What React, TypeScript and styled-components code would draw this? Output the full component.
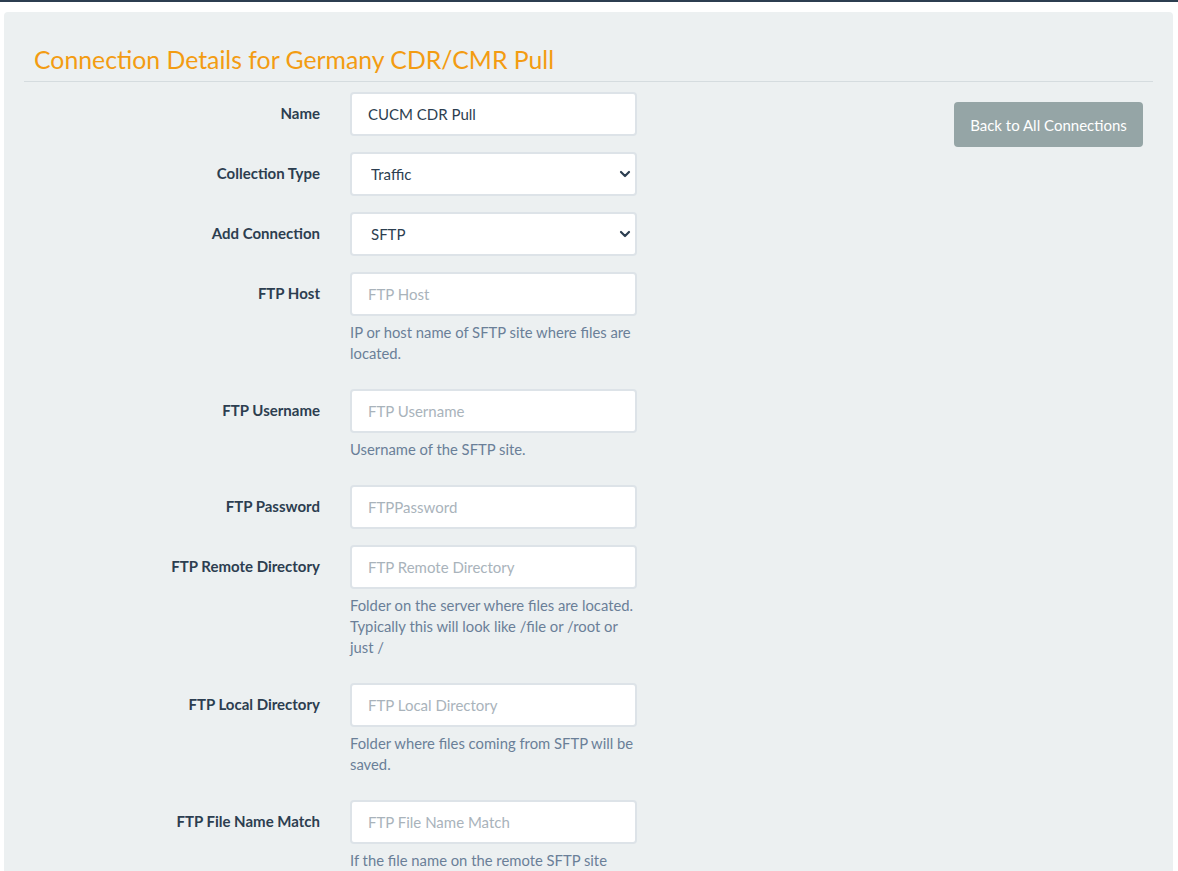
import React from "react";
import styled, { createGlobalStyle } from "styled-components";

const GlobalStyle = createGlobalStyle`
  html, body { margin: 0; padding: 0; background: #ffffff; }
  body {
    font-family: Lato, "Noto Sans", "Liberation Sans", sans-serif;
    font-size: 15px;
    color: #2c3e50;
    border-top: 2px solid #2c3e50;
  }
  * { box-sizing: border-box; }
`;

const Panel = styled.div`
  margin: 10px 5px 0 4px;
  background: #ecf0f1;
  border-radius: 4px;
  padding: 0 20px 40px;
  min-height: 900px;
`;

const Header = styled.div`
  padding: 32px 10px 6px;
  border-bottom: 1px solid #d5dcdf;
`;

const Title = styled.h2`
  margin: 0;
  font-size: 24.8px;
  font-weight: 400;
  line-height: 31px;
  color: #f39c12;
`;

const Body = styled.div`
  display: flex;
  justify-content: space-between;
  padding-top: 10px;
`;

const Form = styled.form`
  display: flex;
  flex-direction: column;
`;

const Row = styled.div`
  display: grid;
  grid-template-columns: 296px 287px;
  column-gap: 30px;
  margin-bottom: 16px;
`;

const Label = styled.label`
  text-align: right;
  font-weight: 700;
  font-size: 15px;
  line-height: 22px;
  padding-top: 10px;
  color: #2c3e50;
`;

const Field = styled.div`
  display: flex;
  flex-direction: column;
`;

const Input = styled.input`
  height: 44px;
  width: 100%;
  border: 2px solid #dde3e8;
  border-radius: 4px;
  background: #ffffff;
  padding: 0 16px;
  font-family: inherit;
  font-size: 15px;
  color: #2c3e50;
  outline: none;
  &::placeholder { color: #a9b3bb; }
`;

const SelectWrap = styled.div`
  position: relative;
`;

const Select = styled.select`
  appearance: none;
  height: 44px;
  width: 100%;
  border: 2px solid #dde3e8;
  border-radius: 4px;
  background: #ffffff;
  padding: 0 16px 0 19px;
  font-family: inherit;
  font-size: 15px;
  color: #2c3e50;
  outline: none;
`;

const Chevron = styled.svg`
  position: absolute;
  right: 6px;
  top: 17px;
  width: 12px;
  height: 10px;
  pointer-events: none;
`;

const Help = styled.p`
  margin: 6px -2px 9px 0;
  font-size: 14.8px;
  line-height: 21px;
  color: #6a7f98;
`;

const Aside = styled.div`
  padding-top: 10px;
  padding-right: 10px;
`;

const BackButton = styled.button`
  height: 45px;
  width: 189px;
  border: none;
  border-radius: 4px;
  background: #95a5a6;
  color: #ffffff;
  font-family: inherit;
  font-size: 15px;
  cursor: pointer;
`;

type FieldDef = {
  label: string;
  kind: "input" | "select";
  value?: string;
  placeholder?: string;
  options?: string[];
  help?: string;
};

const fields: FieldDef[] = [
  { label: "Name", kind: "input", value: "CUCM CDR Pull" },
  { label: "Collection Type", kind: "select", options: ["Traffic"] },
  { label: "Add Connection", kind: "select", options: ["SFTP"] },
  {
    label: "FTP Host",
    kind: "input",
    placeholder: "FTP Host",
    help: "IP or host name of SFTP site where files are located.",
  },
  {
    label: "FTP Username",
    kind: "input",
    placeholder: "FTP Username",
    help: "Username of the SFTP site.",
  },
  { label: "FTP Password", kind: "input", placeholder: "FTPPassword" },
  {
    label: "FTP Remote Directory",
    kind: "input",
    placeholder: "FTP Remote Directory",
    help: "Folder on the server where files are located. Typically this will look like /file or /root or just /",
  },
  {
    label: "FTP Local Directory",
    kind: "input",
    placeholder: "FTP Local Directory",
    help: "Folder where files coming from SFTP will be saved.",
  },
  {
    label: "FTP File Name Match",
    kind: "input",
    placeholder: "FTP File Name Match",
    help: "If the file name on the remote SFTP site matches this pattern it will be downloaded.",
  },
];

export default function App() {
  return (
    <>
      <GlobalStyle />
      <Panel>
        <Header>
          <Title>Connection Details for Germany CDR/CMR Pull</Title>
        </Header>
        <Body>
          <Form onSubmit={(e) => e.preventDefault()}>
            {fields.map((f) => (
              <Row key={f.label}>
                <Label>{f.label}</Label>
                <Field>
                  {f.kind === "input" ? (
                    <Input
                      type={f.label === "FTP Password" ? "password" : "text"}
                      defaultValue={f.value}
                      placeholder={f.placeholder}
                    />
                  ) : (
                    <SelectWrap>
                      <Select defaultValue={f.options![0]}>
                        {f.options!.map((o) => (
                          <option key={o}>{o}</option>
                        ))}
                      </Select>
                      <Chevron viewBox="0 0 12 10">
                        <path
                          d="M2 3 L6 7 L10 3"
                          fill="none"
                          stroke="#2c3e50"
                          strokeWidth="2.2"
                          strokeLinecap="round"
                          strokeLinejoin="round"
                        />
                      </Chevron>
                    </SelectWrap>
                  )}
                  {f.help && <Help>{f.help}</Help>}
                </Field>
              </Row>
            ))}
          </Form>
          <Aside>
            <BackButton type="button">Back to All Connections</BackButton>
          </Aside>
        </Body>
      </Panel>
    </>
  );
}
